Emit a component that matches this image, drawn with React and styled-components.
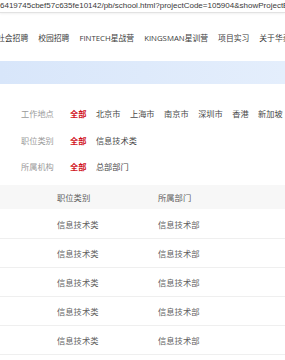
import React from "react";
import styled, { createGlobalStyle } from "styled-components";

const GlobalStyle = createGlobalStyle`
  html, body { margin: 0; padding: 0; background: #fff; }
  body {
    width: 285px;
    overflow: hidden;
    font-family: "Open Sans", "Noto Sans CJK SC", sans-serif;
  }
`;

const Page = styled.div`
  width: 285px;
  height: 360px;
  overflow: hidden;
  background: #fff;
`;

const UrlBar = styled.div`
  height: 12px;
  line-height: 11px;
  font-family: "Liberation Sans", "Noto Sans CJK SC", sans-serif;
  font-size: 8px;
  letter-spacing: 0;
  color: #3a3a3a;
  white-space: nowrap;
  overflow: hidden;
  border-bottom: 1px solid #e2e2e2;
  box-shadow: 0 1px 2px rgba(0, 0, 0, 0.06);
`;

const Nav = styled.nav`
  height: 48px;
  display: flex;
  align-items: center;
  gap: 10px;
  margin-left: -3px;
  white-space: nowrap;
  font-size: 7.8px;
  color: #3c3c3c;
`;

const NavItem = styled.span`
  flex: none;
`;

const Banner = styled.div`
  height: 23px;
  background: linear-gradient(to right, #d8e6fa, #e4eefc);
`;

const Filters = styled.div`
  padding-top: 16px;
  padding-left: 21px;
  margin-bottom: 5px;
`;

const FilterRow = styled.div`
  height: 26.5px;
  display: flex;
  align-items: center;
  white-space: nowrap;
  font-size: 8.2px;
`;

const FilterLabel = styled.span`
  flex: none;
  width: 49px;
  color: #9a9a9a;
`;

const Options = styled.div`
  display: flex;
  gap: 9.5px;
`;

const Option = styled.span`
  flex: none;
  color: ${(p) => (p.$active ? "#d0111b" : "#4a4a4a")};
  font-weight: ${(p) => (p.$active ? 700 : 400)};
`;

const Table = styled.div`
  display: flex;
  flex-direction: column;
  font-size: 8.3px;
  color: #606060;
`;

const Row = styled.div`
  display: grid;
  grid-template-columns: 57px 101px 1fr;
  align-items: center;
  height: ${(p) => (p.$header ? "24px" : "28px")};
  background: ${(p) => (p.$header ? "#f7f7f7" : "#fff")};
  border-bottom: ${(p) => (p.$header ? "none" : "1px solid #efefef")};
  margin-bottom: ${(p) => (p.$header ? "1px" : "0")};
  white-space: nowrap;
`;

const Cell = styled.span``;

const navItems = ["社会招聘", "校园招聘", "FINTECH星战营", "KINGSMAN星训营", "项目实习", "关于华泰"];

const filters = [
  { label: "工作地点", options: ["北京市", "上海市", "南京市", "深圳市", "香港", "新加坡"] },
  { label: "职位类别", options: ["信息技术类"] },
  { label: "所属机构", options: ["总部部门"] },
];

export default function App() {
  return (
    <Page>
      <GlobalStyle />
      <UrlBar>6419745cbef57c635fe10142/pb/school.html?projectCode=105904&amp;showProjectBanner=true</UrlBar>
      <Nav>
        {navItems.map((n) => (
          <NavItem key={n}>{n}</NavItem>
        ))}
      </Nav>
      <Banner />
      <Filters>
        {filters.map((f) => (
          <FilterRow key={f.label}>
            <FilterLabel>{f.label}</FilterLabel>
            <Options>
              <Option $active>全部</Option>
              {f.options.map((o) => (
                <Option key={o}>{o}</Option>
              ))}
            </Options>
          </FilterRow>
        ))}
      </Filters>
      <Table>
        <Row $header>
          <Cell />
          <Cell>职位类别</Cell>
          <Cell>所属部门</Cell>
        </Row>
        {[0, 1, 2, 3, 4].map((i) => (
          <Row key={i}>
            <Cell />
            <Cell>信息技术类</Cell>
            <Cell>信息技术部</Cell>
          </Row>
        ))}
      </Table>
    </Page>
  );
}
